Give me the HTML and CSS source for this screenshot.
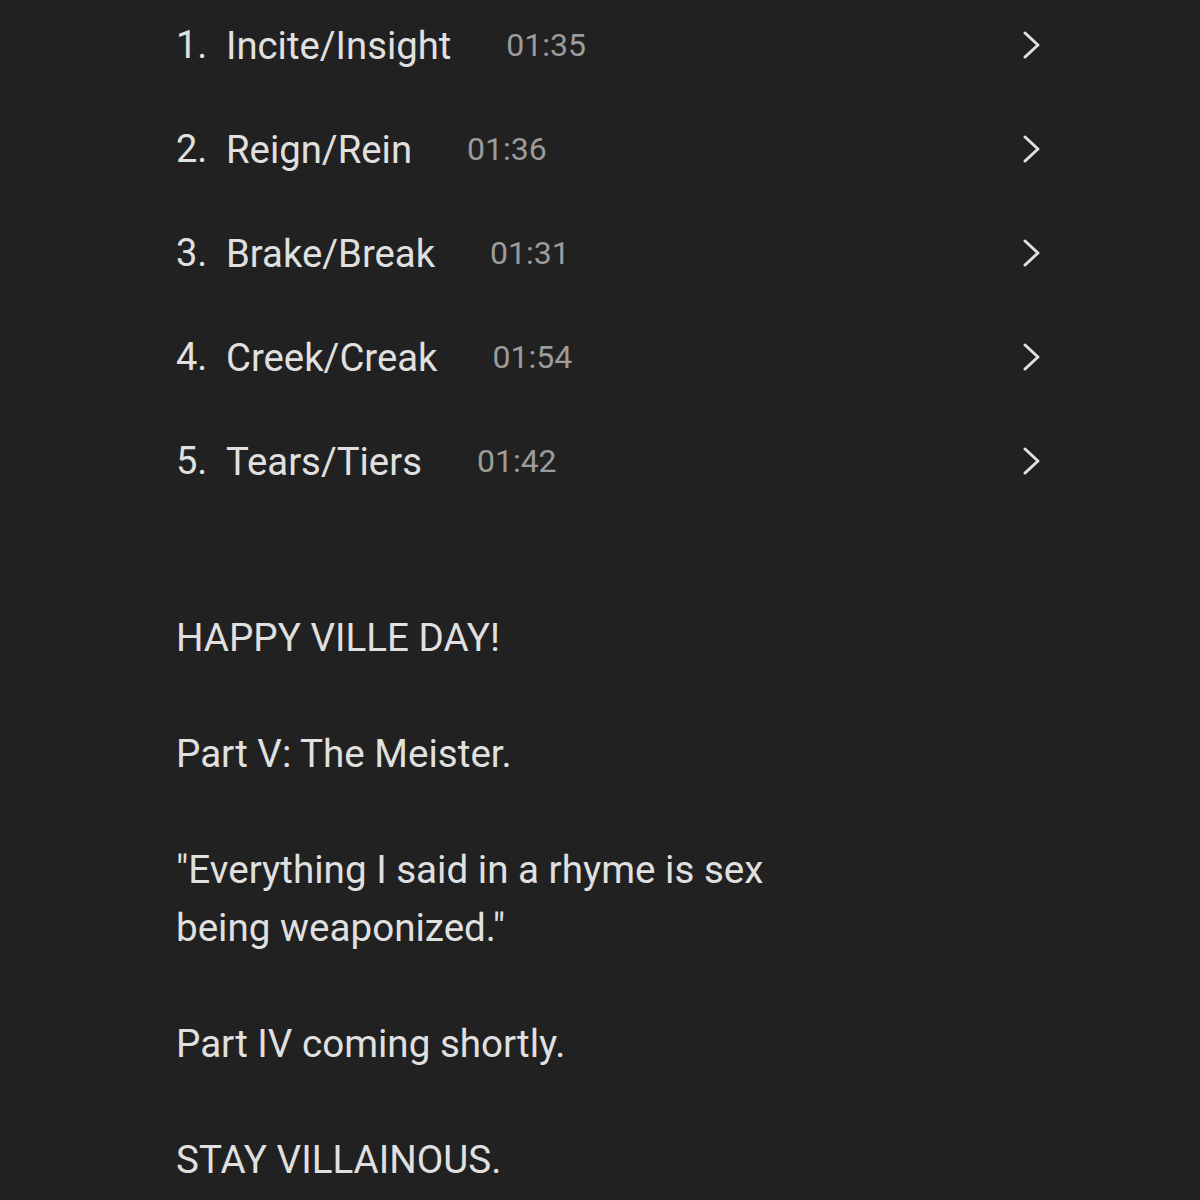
FILE: index.html
```html
<!DOCTYPE html>
<html>
<head>
<meta charset="utf-8">
<link rel="stylesheet" href="styles.css">
</head>
<body>
<div class="page">
  <ol class="tracks">
    <li class="track"><span class="num">1.</span><span class="title">Incite/Insight</span><span class="time">01:35</span><svg class="chev" viewBox="0 0 20 30"><path d="M3 3 L16 15 L3 27"/></svg></li>
    <li class="track"><span class="num">2.</span><span class="title">Reign/Rein</span><span class="time">01:36</span><svg class="chev" viewBox="0 0 20 30"><path d="M3 3 L16 15 L3 27"/></svg></li>
    <li class="track"><span class="num">3.</span><span class="title">Brake/Break</span><span class="time">01:31</span><svg class="chev" viewBox="0 0 20 30"><path d="M3 3 L16 15 L3 27"/></svg></li>
    <li class="track"><span class="num">4.</span><span class="title">Creek/Creak</span><span class="time">01:54</span><svg class="chev" viewBox="0 0 20 30"><path d="M3 3 L16 15 L3 27"/></svg></li>
    <li class="track"><span class="num">5.</span><span class="title">Tears/Tiers</span><span class="time">01:42</span><svg class="chev" viewBox="0 0 20 30"><path d="M3 3 L16 15 L3 27"/></svg></li>
  </ol>
  <div class="desc">
    <p>HAPPY VILLE DAY!</p>
    <p>Part V: The Meister.</p>
    <p>"Everything I said in a rhyme is sex being weaponized."</p>
    <p>Part IV coming shortly.</p>
    <p>STAY VILLAINOUS.</p>
  </div>
</div>
</body>
</html>
```
FILE: styles.css
```css
html, body {
  margin: 0;
  padding: 0;
  background: #212121;
}
body {
  font-family: Roboto, "Liberation Sans", sans-serif;
  color: #e0e0e0;
  overflow: hidden;
}
.page {
  padding-left: 176px;
  width: 866px;
}
.tracks {
  list-style: none;
  margin: -7px 0 0 0;
  padding: 0;
}
.track {
  display: flex;
  align-items: center;
  height: 104px;
}
.num {
  font-size: 38px;
  width: 50px;
}
.title {
  font-size: 38.3px;
}
.time {
  font-size: 32px;
  color: #9c9c9c;
  margin-left: 55px;
}
.chev {
  margin-left: auto;
  width: 20px;
  height: 30px;
  fill: none;
  stroke: #e0e0e0;
  stroke-width: 3;
  stroke-linecap: round;
  stroke-linejoin: round;
}
.desc {
  margin-top: 96px;
  width: 660px;
  font-size: 38.6px;
  line-height: 58px;
}
.desc p {
  margin: 0 0 58px 0;
}
```
